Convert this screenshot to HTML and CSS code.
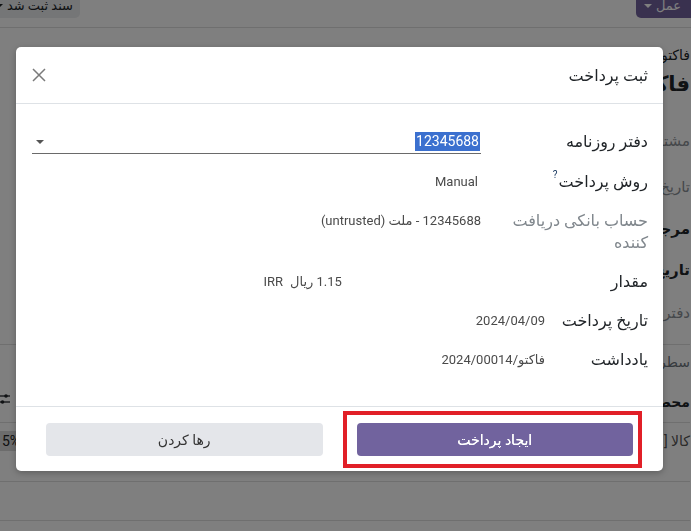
FILE: index.html
```html
<!DOCTYPE html>
<html lang="fa" dir="rtl">
<head>
<meta charset="utf-8">
<title>ثبت پرداخت</title>
<link rel="stylesheet" href="styles.css">
</head>
<body>
<div class="page">
  <div class="cp">
    <div class="cp-btn cp-action">عمل <span class="tri"></span></div>
    <div class="cp-btn cp-status">سند ثبت شد <span class="tri"></span></div>
  </div>
  <div class="sheet">
    <div class="s-sub">فاکتور مشتری</div>
    <div class="s-title">فاکتور/2024/00014</div>
    <div class="s-field muted f1">مشتری</div>
    <div class="s-field muted f2">تاریخ فاکتور</div>
    <div class="s-field strong f3">مرجع پرداخت</div>
    <div class="s-field strong f4">تاریخ سررسید</div>
    <div class="s-field muted f5">دفتر روزنامه</div>
    <div class="s-sep"></div>
    <div class="s-tabs">سطرهای فاکتور</div>
    <div class="s-thead">
      <span>محصول</span>
      <svg class="sliders" width="10" height="14" viewBox="0 0 10 14"><line x1="0" y1="4" x2="10" y2="4" stroke="#212529" stroke-width="1.3"/><circle cx="6" cy="4" r="1.8" fill="#212529"/><line x1="0" y1="10" x2="10" y2="10" stroke="#212529" stroke-width="1.3"/><circle cx="2.5" cy="10" r="1.8" fill="#212529"/></svg>
    </div>
    <div class="s-trow">
      <span class="s-prod">[001] کالا</span>
      <span class="s-tag">5%</span>
    </div>
    <div class="s-trow2"></div>
  </div>
</div>

<div class="backdrop"></div>

<div class="modal">
  <header class="m-head">
    <h4 class="m-title">ثبت پرداخت</h4>
    <button class="m-close" aria-label="close">
      <svg width="14" height="14" viewBox="0 0 14 14"><path d="M1 1 L13 13 M13 1 L1 13" stroke="#7a7a7a" stroke-width="1.5" fill="none"/></svg>
    </button>
  </header>
  <div class="m-body">
    <div class="grp g1">
      <div class="row r1">
        <div class="lbl">دفتر روزنامه</div>
        <div class="val">
          <div class="input">
            <span class="sel">12345688</span>
            <span class="caret"></span>
          </div>
        </div>
      </div>
      <div class="row">
        <div class="lbl">روش پرداخت<sup class="help">?</sup></div>
        <div class="val"><span class="txt latin">Manual</span></div>
      </div>
      <div class="row r3">
        <div class="lbl muted">حساب بانکی دریافت کننده</div>
        <div class="val"><span class="txt">12345688 - ملت (untrusted)</span></div>
      </div>
    </div>
    <div class="grp g2">
      <div class="row">
        <div class="lbl">مقدار</div>
        <div class="val amount">
          <span class="amt">1.15&nbsp;ریال</span>
          <span class="cur">IRR</span>
        </div>
      </div>
      <div class="row">
        <div class="lbl">تاریخ پرداخت</div>
        <div class="val"><span class="txt">2024/04/09</span></div>
      </div>
      <div class="row">
        <div class="lbl">یادداشت</div>
        <div class="val"><span class="txt">فاکتو/2024/00014</span></div>
      </div>
    </div>
  </div>
  <footer class="m-foot">
    <button class="btn btn-primary">ایجاد پرداخت</button>
    <button class="btn btn-secondary">رها کردن</button>
  </footer>
</div>

<div class="annot"></div>
</body>
</html>
```

FILE: styles.css
```css
* { box-sizing: border-box; }
html, body { margin: 0; padding: 0; }
body {
  width: 691px;
  height: 531px;
  overflow: hidden;
  position: relative;
  direction: rtl;
  background: #ffffff;
  color: #212529;
  font-family: Roboto, "DejaVu Sans", sans-serif;
}

/* background page */
.page { height: 531px; overflow: hidden; }
.cp {
  height: 28px;
  border-bottom: 1px solid #dedede;
  display: flex;
  justify-content: space-between;
  align-items: flex-start;
}
.cp-btn {
  height: 30px;
  margin-top: -12px;
  padding-top: 9px;
  display: flex;
  align-items: flex-start;
  gap: 4px;
  font-size: 13px;
  line-height: 18px;
  white-space: nowrap;
}
.cp-action {
  width: 55px;
  background: #72639f;
  color: #ffffff;
  border-radius: 0 0 0 5px;
  padding-right: 10px;
}
.cp-status {
  width: 80px;
  background: #eaecef;
  color: #212529;
  border-radius: 0 0 5px 0;
  padding-right: 7px;
  overflow: hidden;
}
.tri {
  display: inline-block;
  flex: none;
  width: 0; height: 0;
  margin-top: 7px;
  border-left: 4px solid transparent;
  border-right: 4px solid transparent;
  border-top: 4px solid currentColor;
}
.sheet { padding-right: 1px; }
.s-sub { margin-top: 17px; font-size: 14px; line-height: 20px; white-space: nowrap; }
.s-title { margin-top: 5px; font-size: 21px; line-height: 28px; font-weight: bold; white-space: nowrap; }
.s-field { font-size: 15px; line-height: 22px; white-space: nowrap; }
.s-field.muted { color: #8b9096; }
.s-field.strong { color: #212529; font-weight: 600; }
.f1 { margin-top: 32px; }
.f2 { margin-top: 24px; }
.f3 { margin-top: 20px; }
.f4 { margin-top: 19px; }
.f5 { margin-top: 21px; }
.s-sep { height: 21px; border-bottom: 1px solid #dedede; }
.s-tabs { height: 35px; font-size: 14px; line-height: 34px; color: #6c757d; }
.s-thead {
  height: 43px;
  border-bottom: 1px solid #dedede;
  display: flex;
  justify-content: space-between;
  align-items: center;
  font-size: 14px;
  font-weight: 600;
  padding-top: 2px;
}
.sliders { display: block; margin-top: -6px; }
.s-trow {
  height: 59px;
  border-bottom: 1px solid #dedede;
  display: flex;
  justify-content: space-between;
  align-items: flex-start;
  padding-top: 8px;
  font-size: 14px;
  line-height: 20px;
}
.s-prod { color: #555; direction: ltr; }
.s-tag { background: #d8d8d8; padding: 0 2px; line-height: 20px; color: #222; }
.s-trow2 { height: 39px; border-bottom: 1px solid #dedede; }

/* overlay */
.backdrop {
  position: fixed;
  inset: 0;
  background: rgba(0, 0, 0, 0.5);
}

/* modal */
.modal {
  position: absolute;
  top: 47px;
  left: 16px;
  width: 647px;
  background: #ffffff;
  border-radius: 5px;
  box-shadow: 0 2px 6px rgba(0, 0, 0, 0.25);
  display: flex;
  flex-direction: column;
}
.m-head {
  height: 57px;
  border-bottom: 1px solid #dee2e6;
  display: flex;
  align-items: center;
  justify-content: space-between;
  padding: 0 15px 0 16px;
}
.m-title {
  margin: 0;
  font-size: 16px;
  font-weight: normal;
  color: #212529;
  line-height: 22px;
  padding-top: 1px;
}
.m-close {
  border: 0;
  background: transparent;
  padding: 0;
  width: 14px;
  height: 14px;
  display: block;
}
.m-close svg { display: block; }

.m-body {
  padding: 26px 15px 35px 16px;
  display: flex;
  flex-direction: column;
  gap: 17px;
}
.grp { display: flex; flex-direction: column; gap: 17px; }
.row { display: flex; align-items: flex-start; min-height: 22px; }
.lbl {
  font-size: 16px;
  line-height: 22px;
  color: #1f2327;
  flex: none;
  white-space: nowrap;
}
.g1 .lbl { width: 167px; }
.g2 .lbl { width: 103px; }
.lbl.muted { color: #80878d; white-space: normal; padding-left: 12px; }
.r1 .lbl { line-height: 24px; }
.help {
  font-size: 10px;
  color: #1d3c63;
  margin-right: 1px;
  vertical-align: 9px;
  line-height: 0;
}
.val { flex: 1; font-size: 13px; line-height: 22px; color: #4a4a4a; }
.txt { display: inline-block; }
.latin { margin-right: 3px; }
.input {
  height: 24px;
  border-bottom: 1px solid #6a6a6a;
  display: flex;
  justify-content: space-between;
  align-items: center;
  padding: 1px 1px 2px 4px;
}
.sel {
  background: #3b70cf;
  color: #ffffff;
  font-size: 14px;
  line-height: 19px;
  padding: 0 1px;
}
.caret {
  width: 0; height: 0;
  border-left: 4px solid transparent;
  border-right: 4px solid transparent;
  border-top: 4px solid #555;
  margin-top: 2px;
}
.amount { display: flex; align-items: flex-start; gap: 7px; }
.amt { width: 255px; text-align: left; }

.m-foot {
  border-top: 1px solid #dee2e6;
  padding: 16px 30px 15px 30px;
  display: flex;
  gap: 34px;
}
.btn {
  flex: 1;
  height: 33px;
  border: 0;
  border-radius: 4px;
  font-family: Roboto, "DejaVu Sans", sans-serif;
  font-size: 14px;
  cursor: pointer;
}
.btn-primary { background: #71639e; color: #ffffff; font-weight: normal; text-shadow: 0 0 0.4px #fff; }
.btn-secondary { background: #e4e6ea; color: #333; }

/* annotation */
.annot {
  position: absolute;
  left: 343px;
  top: 411px;
  width: 299px;
  height: 57px;
  border: 4px solid #e11f27;
}
```
